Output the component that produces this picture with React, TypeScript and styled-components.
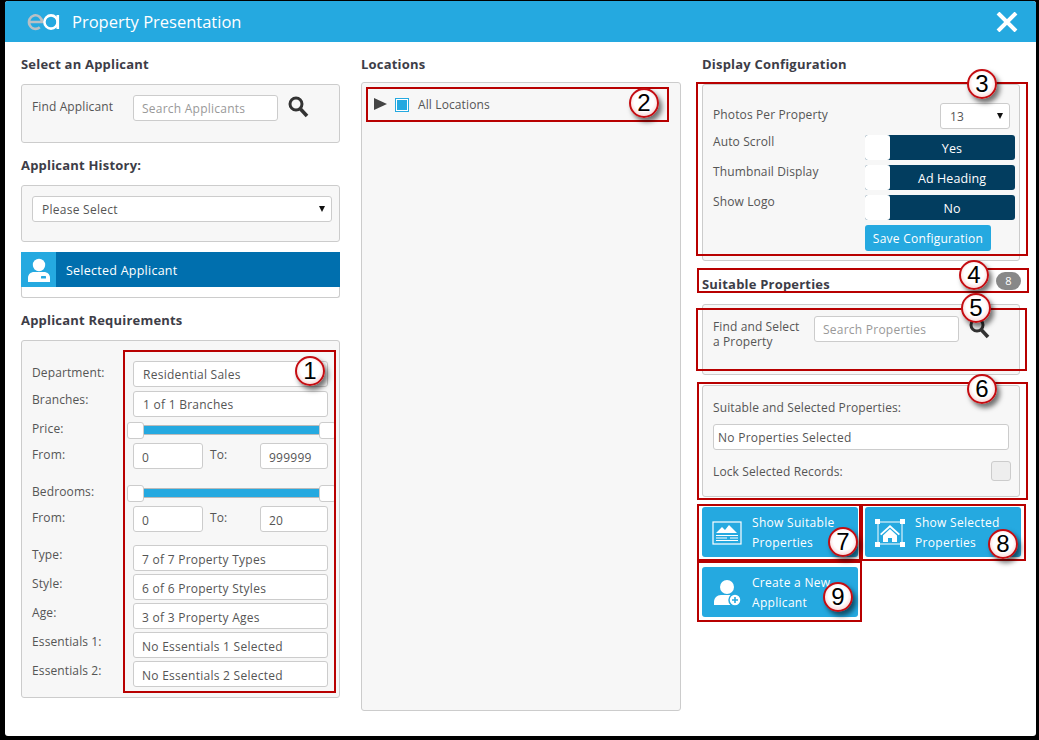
import styled, { createGlobalStyle } from "styled-components";

const GlobalStyle = createGlobalStyle`
  html, body {
    margin: 0;
    height: 740px;
    overflow: hidden;
    background: #000;
  }
  * {
    box-sizing: border-box;
  }
`;

const BLUE = "#25a9e0";

const Page = styled.div`
  position: relative;
  width: 1039px;
  height: 740px;
  padding: 1px 3px 4px 5px;
  font-family: "Open Sans", sans-serif;
  font-size: 12px;
  letter-spacing: 0.12px;
  color: #555;
`;

const Modal = styled.div`
  height: 100%;
  background: #fff;
  border-radius: 3px;
  overflow: hidden;
`;

const Header = styled.header`
  height: 41px;
  background: ${BLUE};
  display: flex;
  align-items: center;
  padding: 0 18px 0 22px;
  color: #fff;
`;

const HeaderTitle = styled.h1`
  margin: 0 0 0 12px;
  flex: 1;
  font-size: 16.5px;
  font-weight: 400;
  letter-spacing: 0;
  line-height: 24px;
`;

const Body = styled.div`
  display: grid;
  grid-template-columns: 319px 320px 318px;
  column-gap: 21px;
  padding: 12px 0 0 16px;
`;

const Column = styled.section`
  display: flex;
  flex-direction: column;
`;

const Title = styled.h2<{ $top?: number; $bottom?: number }>`
  margin: ${(p) => p.$top ?? 0}px 0 ${(p) => p.$bottom ?? 10}px;
  height: 20px;
  font-size: 13px;
  line-height: 20px;
  font-weight: 700;
  letter-spacing: 0.2px;
  color: #3d3d47;
`;

const Panel = styled.div<{ $height: number; $padding?: string; $top?: number }>`
  height: ${(p) => p.$height}px;
  margin-top: ${(p) => p.$top ?? 0}px;
  padding: ${(p) => p.$padding ?? "0"};
  background: #f7f7f7;
  border: 1px solid #ccc;
  border-radius: 3px;
`;

const FieldBase = styled.div<{ $width?: number; $pad?: number; $line?: number }>`
  width: ${(p) => (p.$width ? `${p.$width}px` : "100%")};
  height: 26px;
  padding: 0 ${(p) => p.$pad ?? 9}px;
  background: #fff;
  border: 1px solid #ccc;
  border-radius: 3px;
  line-height: ${(p) => p.$line ?? 26}px;
  font-size: 12px;
  letter-spacing: 0.26px;
  color: #555;
  white-space: nowrap;
  flex: none;
`;

const SearchInput = styled.input`
  width: 145px;
  height: 26px;
  padding: 0 8px;
  background: #fff;
  border: 1px solid #ccc;
  border-radius: 3px;
  font-family: inherit;
  font-size: 12px;
  letter-spacing: 0.24px;
  flex: none;
  &::placeholder {
    color: #999;
    opacity: 1;
  }
`;

const SelectBox = styled(FieldBase)`
  position: relative;
  &::after {
    content: "";
    position: absolute;
    right: 6px;
    top: 9px;
    border-left: 3px solid transparent;
    border-right: 3px solid transparent;
    border-top: 6px solid #111;
  }
`;

const PhotoSelect = styled(SelectBox)`
  margin-right: 5px;
`;

const SearchRow = styled.div`
  display: flex;
  align-items: flex-start;
`;

const FindLabel = styled.div`
  width: 101px;
  flex: none;
  line-height: 17px;
  margin-top: 3px;
`;

const SearchButton = styled.button`
  margin: 0 0 0 10px;
  padding: 0;
  border: 0;
  background: none;
  display: block;
  height: 26px;
`;

const SelectedBox = styled.div`
  margin-top: 10px;
  height: 46px;
  border: 1px solid #ccc;
  border-top: 0;
  border-radius: 0 0 3px 3px;
`;

const SelectedBar = styled.div`
  height: 35px;
  margin: 0 -1px;
  background: #006fae;
  display: flex;
  align-items: center;
  color: #fff;
  font-size: 12.5px;
  letter-spacing: 0.25px;
`;

const SelectedIcon = styled.div`
  width: 35px;
  height: 35px;
  background: ${BLUE};
  margin-right: 10px;
  display: flex;
  align-items: center;
  justify-content: center;
`;

const SelectedText = styled.span`
  padding-top: 2px;
`;

const Row = styled.div<{ $height: number }>`
  height: ${(p) => p.$height}px;
  display: flex;
  align-items: flex-start;
`;

const RowLabel = styled.div<{ $shift?: number }>`
  width: 101px;
  flex: none;
  line-height: 17px;
  margin-top: ${(p) => p.$shift ?? 1}px;
`;

const ToLabel = styled.div`
  width: 57px;
  padding-left: 7px;
  flex: none;
  line-height: 17px;
  margin-top: 3px;
`;

const Slider = styled.div`
  position: relative;
  width: 177px;
  height: 10px;
  margin: 3px 0 0 10px;
  background: ${BLUE};
  border: 1px solid #bbb;
`;

const SliderHandle = styled.span<{ $side: "left" | "right" }>`
  position: absolute;
  top: -4px;
  ${(p) => p.$side}: -17px;
  width: 17px;
  height: 17px;
  background: #fff;
  border: 1px solid #ccc;
  border-radius: 3px;
`;

const Tree = styled.div`
  display: flex;
  align-items: center;
  height: 20px;
`;

const TreeArrow = styled.span`
  width: 0;
  height: 0;
  border-top: 6px solid transparent;
  border-bottom: 6px solid transparent;
  border-left: 13px solid #444;
  margin-right: 8px;
`;

const TreeCheck = styled.span`
  width: 14px;
  height: 14px;
  margin: 2px 9px 0 0;
  border: 1px solid ${BLUE};
  background: ${BLUE};
  box-shadow: inset 0 0 0 1px #fff;
`;

const ConfigRow = styled.div<{ $height: number }>`
  height: ${(p) => p.$height}px;
  display: flex;
  align-items: flex-start;
  justify-content: space-between;
`;

const ConfigLabel = styled.div<{ $top?: number }>`
  line-height: 17px;
  margin-top: ${(p) => p.$top ?? -2}px;
`;

const Toggle = styled.div`
  width: 150px;
  height: 25px;
  display: flex;
  background: #023d5f;
  border-radius: 3px;
  color: #fff;
  font-size: 12.5px;
  letter-spacing: 0.1px;
  line-height: 27px;
  text-align: center;
`;

const ToggleKnob = styled.span`
  width: 25px;
  background: #fff;
  border-radius: 3px;
`;

const ToggleText = styled.span`
  flex: 1;
  padding-right: 1px;
`;

const SaveButton = styled.button`
  display: block;
  width: 126px;
  height: 26px;
  margin-left: 152px;
  padding: 0;
  border: 0;
  border-radius: 3px;
  background: ${BLUE};
  color: #fff;
  font-family: inherit;
  font-size: 12px;
  letter-spacing: 0.26px;
`;

const TitleRow = styled.div`
  position: relative;
  margin-top: 13px;
  height: 20px;
  margin-bottom: 10px;
`;

const CountBadge = styled.span`
  position: absolute;
  right: -1px;
  top: -2px;
  width: 25px;
  height: 18px;
  border-radius: 9px;
  background: #888;
  color: #fff;
  font-size: 11px;
  line-height: 18px;
  text-align: center;
`;

const StackedLabel = styled.div`
  width: 101px;
  flex: none;
  line-height: 15px;
  margin-top: 3px;
`;

const PlainLabel = styled.div`
  line-height: 17px;
  margin-bottom: 8px;
`;

const LockRow = styled.div`
  display: flex;
  justify-content: space-between;
  align-items: center;
  margin-top: 10px;
  line-height: 20px;
`;

const LockText = styled.span`
  margin-top: 2px;
`;

const LockBox = styled.span`
  width: 20px;
  height: 20px;
  margin-right: -2px;
  background: #eee;
  border: 1px solid #ccc;
  border-radius: 3px;
`;

const ActionGrid = styled.div`
  display: grid;
  grid-template-columns: 156px 156px;
  grid-auto-rows: 50px;
  gap: 10px 7px;
  margin-top: 10px;
`;

const ActionButton = styled.button`
  display: flex;
  align-items: center;
  padding: 2px 0 0;
  border: 0;
  border-radius: 3px;
  background: ${BLUE};
  color: #fff;
  font-family: inherit;
  font-size: 12px;
  letter-spacing: 0.3px;
  line-height: 20px;
  text-align: left;
`;

const ActionIcon = styled.span`
  width: 50px;
  flex: none;
  display: flex;
  justify-content: center;
`;

const Mark = styled.div<{ $x: number; $y: number; $w: number; $h: number }>`
  position: absolute;
  left: ${(p) => p.$x}px;
  top: ${(p) => p.$y}px;
  width: ${(p) => p.$w}px;
  height: ${(p) => p.$h}px;
  border: 2px solid #b80000;
  pointer-events: none;
`;

const Bubble = styled.div<{ $x: number; $y: number }>`
  position: absolute;
  left: ${(p) => p.$x - 15}px;
  top: ${(p) => p.$y - 15}px;
  width: 30px;
  height: 30px;
  border-radius: 50%;
  border: 2px solid #c40d12;
  background: radial-gradient(circle at 50% 45%, #fff 50%, #f2b4b4 100%);
  box-shadow: 3px 4px 5px rgba(0, 0, 0, 0.55);
  font-family: "Liberation Sans", Arial, sans-serif;
  font-size: 24px;
  letter-spacing: 0;
  line-height: 26px;
  text-align: center;
  color: #000;
`;

const marks = [
  { x: 123, y: 350, w: 213, h: 343 },
  { x: 366, y: 87, w: 303, h: 35 },
  { x: 696, y: 82, w: 332, h: 174 },
  { x: 697, y: 268, w: 332, h: 25 },
  { x: 696, y: 308, w: 331, h: 63 },
  { x: 697, y: 382, w: 331, h: 118 },
  { x: 697, y: 504, w: 164, h: 57 },
  { x: 861, y: 504, w: 165, h: 57 },
  { x: 697, y: 561, w: 165, h: 61 },
];

const bubbles = [
  { n: 1, x: 310, y: 371 },
  { n: 2, x: 644, y: 103 },
  { n: 3, x: 982, y: 84 },
  { n: 4, x: 974, y: 275 },
  { n: 5, x: 976, y: 308 },
  { n: 6, x: 982, y: 389 },
  { n: 7, x: 843, y: 542 },
  { n: 8, x: 1003, y: 544 },
  { n: 9, x: 838, y: 597 },
];

function Logo() {
  return (
    <svg width="33" height="18" viewBox="0 0 33 18" fill="none" strokeWidth="2.6">
      <path d="M2 9h13a6.5 6.8 0 1 0-2.2 5.2" stroke="#b9c0c5" />
      <circle cx="24" cy="9" r="6.6" stroke="#fff" />
      <path d="M30.8 2v14" stroke="#fff" />
    </svg>
  );
}

function CloseIcon() {
  return (
    <svg width="22" height="20" viewBox="0 0 22 20" stroke="#fff" strokeWidth="4">
      <path d="M2 1l18 18M20 1L2 19" />
    </svg>
  );
}

function SearchIcon() {
  return (
    <svg width="21" height="22" viewBox="0 0 21 22" fill="none" stroke="#333">
      <circle cx="8" cy="8" r="6" strokeWidth="3" />
      <path d="M12.5 13l6.5 7" strokeWidth="3.6" />
    </svg>
  );
}

function PersonIcon() {
  return (
    <svg width="22" height="24" viewBox="0 0 22 24" fill="#fff">
      <circle cx="11" cy="7" r="6.2" />
      <path d="M0 24v-4c0-4 3-6 6-6h10c3 0 6 2 6 6v4z" />
      <rect x="13" y="18" width="5" height="2.5" rx="0.5" fill={BLUE} />
    </svg>
  );
}

function ListingIcon() {
  return (
    <svg width="30" height="24" viewBox="0 0 30 24" fill="none" stroke="#fff">
      <rect x="1" y="1" width="28" height="22" strokeWidth="1.2" />
      <path d="M4 12l6-6 3 3 4-5 8 8z" fill="#fff" stroke="none" />
      <path d="M4 14.5h22M4 17h11M18 17h8M4 19.5h22" strokeWidth="1.2" />
    </svg>
  );
}

function SelectedHouseIcon() {
  return (
    <svg width="30" height="28" viewBox="0 0 30 28" fill="#fff">
      <path d="M3 3h24v22H3z" fill="none" stroke="#fff" strokeWidth="1" />
      <rect width="5" height="5" />
      <rect x="25" width="5" height="5" />
      <rect y="23" width="5" height="5" />
      <rect x="25" y="23" width="5" height="5" />
      <path d="M15 6L5 15l1.3 1.3L15 8.5l8.7 7.8L25 15z" />
      <path d="M8 16.5L15 10l7 6.5V23h-5v-4h-4v4H8z" />
    </svg>
  );
}

function AddPersonIcon() {
  return (
    <svg width="28" height="26" viewBox="0 0 28 26" fill="#fff">
      <circle cx="14" cy="7" r="7" />
      <path d="M1 25v-3c0-4 3-7 7-7h10c2 0 3 1 4 2v8z" />
      <circle cx="22" cy="20" r="6" stroke={BLUE} strokeWidth="1.5" />
      <path d="M19 19.2h2.2V17h1.6v2.2H25v1.6h-2.2V23h-1.6v-2.2H19z" fill={BLUE} />
    </svg>
  );
}

function App() {
  return (
    <Page>
      <GlobalStyle />
      <Modal>
        <Header>
          <Logo />
          <HeaderTitle>Property Presentation</HeaderTitle>
          <CloseIcon />
        </Header>
        <Body>
          <Column>
            <Title>Select an Applicant</Title>
            <Panel $height={59} $padding="10px 10px">
              <SearchRow>
                <FindLabel>Find Applicant</FindLabel>
                <SearchInput placeholder="Search Applicants" />
                <SearchButton>
                  <SearchIcon />
                </SearchButton>
              </SearchRow>
            </Panel>
            <Title $top={12}>Applicant History:</Title>
            <Panel $height={57} $padding="10px 7px 0 10px">
              <SelectBox>Please Select</SelectBox>
            </Panel>
            <SelectedBox>
              <SelectedBar>
                <SelectedIcon>
                  <PersonIcon />
                </SelectedIcon>
                <SelectedText>Selected Applicant</SelectedText>
              </SelectedBar>
            </SelectedBox>
            <Title $top={12}>Applicant Requirements</Title>
            <Panel $height={358} $padding="20px 10px 0">
              <Row $height={30}>
                <RowLabel $shift={3}>Department:</RowLabel>
                <FieldBase $width={195}>Residential Sales</FieldBase>
              </Row>
              <Row $height={31}>
                <RowLabel $shift={0}>Branches:</RowLabel>
                <FieldBase $width={195}>1 of 1 Branches</FieldBase>
              </Row>
              <Row $height={21}>
                <RowLabel $shift={-2}>Price:</RowLabel>
                <Slider>
                  <SliderHandle $side="left" />
                  <SliderHandle $side="right" />
                </Slider>
              </Row>
              <Row $height={42}>
                <RowLabel $shift={3}>From:</RowLabel>
                <FieldBase $width={70} $pad={8} $line={27}>
                  0
                </FieldBase>
                <ToLabel>To:</ToLabel>
                <FieldBase $width={68} $pad={8} $line={27}>
                  999999
                </FieldBase>
              </Row>
              <Row $height={21}>
                <RowLabel $shift={-2}>Bedrooms:</RowLabel>
                <Slider>
                  <SliderHandle $side="left" />
                  <SliderHandle $side="right" />
                </Slider>
              </Row>
              <Row $height={39}>
                <RowLabel $shift={3}>From:</RowLabel>
                <FieldBase $width={70} $pad={8} $line={27}>
                  0
                </FieldBase>
                <ToLabel>To:</ToLabel>
                <FieldBase $width={68} $pad={8} $line={27}>
                  20
                </FieldBase>
              </Row>
              <Row $height={29}>
                <RowLabel>Type:</RowLabel>
                <FieldBase $width={195} $pad={8} $line={27}>
                  7 of 7 Property Types
                </FieldBase>
              </Row>
              <Row $height={29}>
                <RowLabel>Style:</RowLabel>
                <FieldBase $width={195} $pad={8} $line={27}>
                  6 of 6 Property Styles
                </FieldBase>
              </Row>
              <Row $height={29}>
                <RowLabel>Age:</RowLabel>
                <FieldBase $width={195} $pad={8} $line={27}>
                  3 of 3 Property Ages
                </FieldBase>
              </Row>
              <Row $height={29}>
                <RowLabel>Essentials 1:</RowLabel>
                <FieldBase $width={195} $pad={8} $line={27}>
                  No Essentials 1 Selected
                </FieldBase>
              </Row>
              <Row $height={26}>
                <RowLabel>Essentials 2:</RowLabel>
                <FieldBase $width={195} $pad={8} $line={27}>
                  No Essentials 2 Selected
                </FieldBase>
              </Row>
            </Panel>
          </Column>

          <Column>
            <Title $bottom={8}>Locations</Title>
            <Panel $height={629} $padding="11px 12px">
              <Tree>
                <TreeArrow />
                <TreeCheck />
                All Locations
              </Tree>
            </Panel>
          </Column>

          <Column>
            <Title>Display Configuration</Title>
            <Panel $height={177} $padding="18px 4px 0 10px">
              <ConfigRow $height={32}>
                <ConfigLabel $top={3}>Photos Per Property</ConfigLabel>
                <PhotoSelect $width={70}>13</PhotoSelect>
              </ConfigRow>
              <ConfigRow $height={30}>
                <ConfigLabel>Auto Scroll</ConfigLabel>
                <Toggle>
                  <ToggleKnob />
                  <ToggleText>Yes</ToggleText>
                </Toggle>
              </ConfigRow>
              <ConfigRow $height={30}>
                <ConfigLabel>Thumbnail Display</ConfigLabel>
                <Toggle>
                  <ToggleKnob />
                  <ToggleText>Ad Heading</ToggleText>
                </Toggle>
              </ConfigRow>
              <ConfigRow $height={30}>
                <ConfigLabel>Show Logo</ConfigLabel>
                <Toggle>
                  <ToggleKnob />
                  <ToggleText>No</ToggleText>
                </Toggle>
              </ConfigRow>
              <SaveButton>Save Configuration</SaveButton>
            </Panel>
            <TitleRow>
              <Title $bottom={0}>Suitable Properties</Title>
              <CountBadge>8</CountBadge>
            </TitleRow>
            <Panel $height={71} $padding="11px 10px">
              <SearchRow>
                <StackedLabel>
                  Find and Select
                  <br />a Property
                </StackedLabel>
                <SearchInput placeholder="Search Properties" />
                <SearchButton>
                  <SearchIcon />
                </SearchButton>
              </SearchRow>
            </Panel>
            <Panel $height={112} $top={10} $padding="13px 10px 0">
              <PlainLabel>Suitable and Selected Properties:</PlainLabel>
              <FieldBase $width={296} $pad={4}>
                No Properties Selected
              </FieldBase>
              <LockRow>
                <LockText>Lock Selected Records:</LockText>
                <LockBox />
              </LockRow>
            </Panel>
            <ActionGrid>
              <ActionButton>
                <ActionIcon>
                  <ListingIcon />
                </ActionIcon>
                <span>
                  Show Suitable
                  <br />
                  Properties
                </span>
              </ActionButton>
              <ActionButton>
                <ActionIcon>
                  <SelectedHouseIcon />
                </ActionIcon>
                <span>
                  Show Selected
                  <br />
                  Properties
                </span>
              </ActionButton>
              <ActionButton>
                <ActionIcon>
                  <AddPersonIcon />
                </ActionIcon>
                <span>
                  Create a New
                  <br />
                  Applicant
                </span>
              </ActionButton>
            </ActionGrid>
          </Column>
        </Body>
      </Modal>
      {marks.map((m) => (
        <Mark key={`${m.x}-${m.y}`} $x={m.x} $y={m.y} $w={m.w} $h={m.h} />
      ))}
      {bubbles.map((b) => (
        <Bubble key={b.n} $x={b.x} $y={b.y}>
          {b.n}
        </Bubble>
      ))}
    </Page>
  );
}

export default App;
